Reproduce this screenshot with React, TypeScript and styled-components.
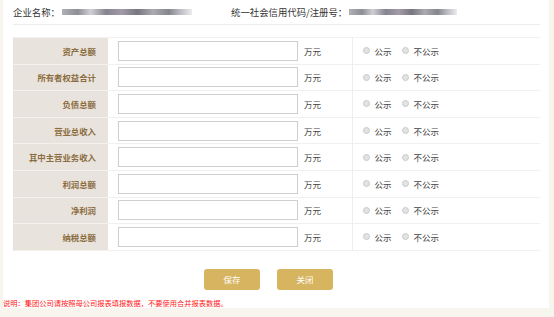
import styled, { createGlobalStyle } from "styled-components";

const GlobalStyle = createGlobalStyle`
  html, body {
    margin: 0;
    padding: 0;
    background: #f8f5ee;
  }
  body {
    font-family: "Noto Sans CJK SC", "Noto Sans", sans-serif;
    color: #333;
  }
`;

const Page = styled.div`
  width: 554px;
  height: 317px;
  padding: 0 5px 0 3px;
  box-sizing: border-box;
`;

const Panel = styled.div`
  background: #fff;
  height: 308px;
  display: flex;
  flex-direction: column;
`;

const Header = styled.div`
  margin: 0 9px 0 10px;
  height: 24px;
  border-bottom: 1px solid #ececec;
  display: flex;
  align-items: center;
  font-size: 9.4px;
  color: #333;
`;

const Field = styled.div<{ $width: number }>`
  display: flex;
  align-items: center;
  width: ${(p) => p.$width}px;
`;

const Mosaic = styled.span<{ $width: number }>`
  display: inline-block;
  width: ${(p) => p.$width}px;
  height: 6px;
  margin-left: 2px;
  filter: blur(0.5px);
  background: linear-gradient(
    90deg,
    #b0b0b5 0%,
    #8e8e97 12%,
    #cfcfd4 22%,
    #868390 34%,
    #a29ba8 46%,
    #77767f 58%,
    #aba9b1 70%,
    #85858e 82%,
    #c2c2c7 92%,
    #ececee 100%
  );
`;

const Table = styled.table`
  margin: 12px 0 0 10px;
  width: 527px;
  border-collapse: collapse;
  table-layout: fixed;
  border-top: 1px solid #f2f2f2;
`;

const Row = styled.tr`
  height: 26.6px;
  border-bottom: 1px solid #f0f0f0;
`;

const LabelCell = styled.td`
  width: 95px;
  background: #e9e3dd;
  color: #8b6d3f;
  font-weight: bold;
  font-size: 8.4px;
  text-align: right;
  padding: 0 12px 0 0;
  box-sizing: border-box;
  border-bottom: 1px solid #f4f1ed;
`;

const InputCell = styled.td`
  width: 244px;
  box-sizing: border-box;
  padding: 0 0 0 10px;
  border-right: 1px solid #eeeeee;
`;

const InputWrap = styled.div`
  display: flex;
  align-items: center;
  gap: 6px;
  font-size: 8.5px;
  color: #444;
`;

const TextInput = styled.input`
  width: 180px;
  height: 20px;
  box-sizing: border-box;
  border: 1px solid #cfcfcf;
  padding: 0 4px;
  margin: 0;
  outline: none;
`;

const RadioCell = styled.td`
  box-sizing: border-box;
  padding: 0 0 0 10px;
`;

const RadioGroup = styled.div`
  display: flex;
  align-items: center;
  font-size: 8.5px;
  color: #444;
`;

const RadioLabel = styled.label<{ $gap: number }>`
  display: flex;
  align-items: center;
  margin-right: ${(p) => p.$gap}px;
`;

const Dot = styled.span`
  width: 7px;
  height: 7px;
  border-radius: 50%;
  background: #e3e3e3;
  border: 1px solid #cacaca;
  box-sizing: border-box;
  margin-right: 5px;
`;

const Buttons = styled.div`
  display: flex;
  justify-content: center;
  gap: 17px;
  margin-top: 18px;
  padding-right: 15px;
`;

const Button = styled.button`
  width: 56px;
  height: 21px;
  border: none;
  border-radius: 3px;
  background: #d7b560;
  color: #fff;
  font-family: "Noto Sans CJK SC", sans-serif;
  font-size: 8.5px;
  padding: 0;
`;

const Note = styled.div`
  margin-top: 8px;
  font-size: 7.25px;
  color: #ff2020;
  white-space: nowrap;
`;

const rows = [
  "资产总额",
  "所有者权益合计",
  "负债总额",
  "营业总收入",
  "其中主营业务收入",
  "利润总额",
  "净利润",
  "纳税总额",
];

export default function App() {
  return (
    <>
      <GlobalStyle />
      <Page>
        <Panel>
          <Header>
            <Field $width={218}>
              企业名称：<Mosaic $width={130} />
            </Field>
            <Field $width={240}>
              统一社会信用代码/注册号：<Mosaic $width={108} />
            </Field>
          </Header>
          <Table>
            <tbody>
              {rows.map((label) => (
                <Row key={label}>
                  <LabelCell>{label}</LabelCell>
                  <InputCell>
                    <InputWrap>
                      <TextInput type="text" />
                      万元
                    </InputWrap>
                  </InputCell>
                  <RadioCell>
                    <RadioGroup>
                      <RadioLabel $gap={10}>
                        <Dot />
                        公示
                      </RadioLabel>
                      <RadioLabel $gap={0}>
                        <Dot />
                        不公示
                      </RadioLabel>
                    </RadioGroup>
                  </RadioCell>
                </Row>
              ))}
            </tbody>
          </Table>
          <Buttons>
            <Button>保存</Button>
            <Button>关闭</Button>
          </Buttons>
          <Note>说明：集团公司请按照母公司报表填报数据，不要使用合并报表数据。</Note>
        </Panel>
      </Page>
    </>
  );
}
